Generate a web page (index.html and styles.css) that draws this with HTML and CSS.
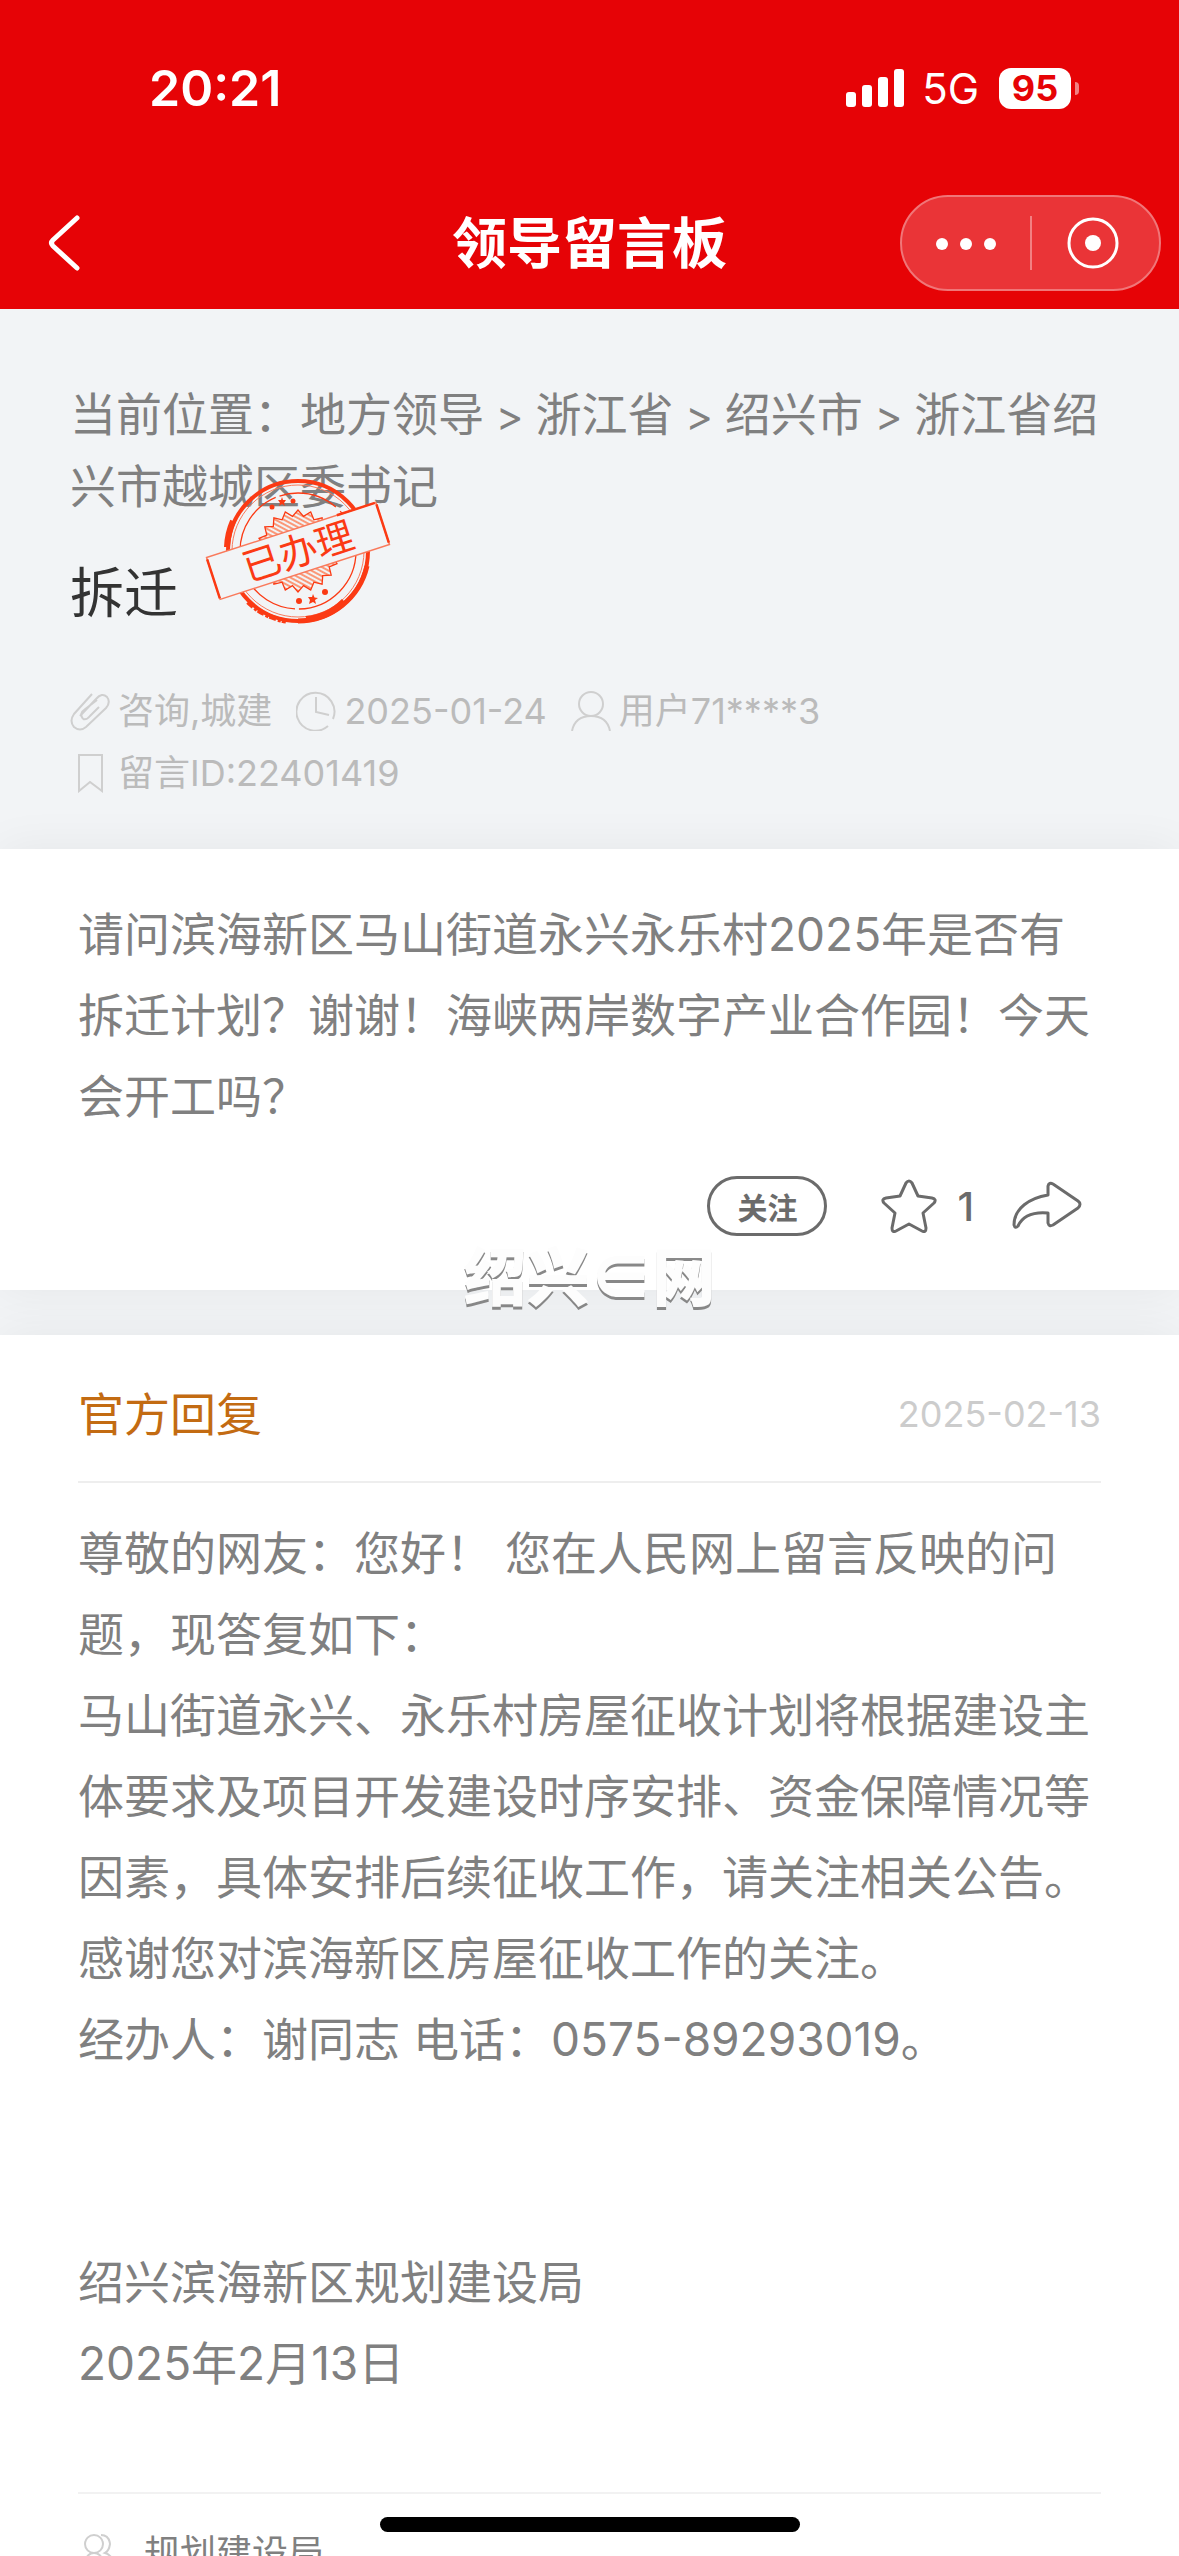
FILE: index.html
```html
<!DOCTYPE html>
<html lang="zh-CN">
<head>
    <meta charset="UTF-8">
    <title>领导留言板</title>
    <meta name="viewport" content="width=device-width, initial-scale=1.0">
    <link rel="stylesheet" href="styles.css">
</head>
<body>
    <div class="app">
        <header class="top">
            <div class="status-bar">
                <span class="time">20:21</span>
                <div class="status-right">
                    <svg class="signal" viewBox="0 0 58 38" fill="#fff">
                        <rect x="0" y="23" width="10" height="15" rx="3"/>
                        <rect x="16" y="16" width="10" height="22" rx="3"/>
                        <rect x="32" y="8" width="10" height="30" rx="3"/>
                        <rect x="48" y="0" width="10" height="38" rx="3"/>
                    </svg>
                    <span class="network">5G</span>
                    <div class="battery"><span class="battery-level">95</span></div>
                </div>
            </div>
            <div class="nav-bar">
                <button class="back" aria-label="返回">
                    <svg viewBox="0 0 32 56" fill="none" stroke="#fff" stroke-width="5" stroke-linecap="round" stroke-linejoin="round">
                        <path d="M29 3L5 25Q2 28 5 31L29 53"/>
                    </svg>
                </button>
                <h1>领导留言板</h1>
                <div class="capsule">
                    <button aria-label="更多">
                        <svg viewBox="0 0 60 54" fill="#fff">
                            <circle cx="6" cy="28" r="6"/>
                            <circle cx="30" cy="28" r="6"/>
                            <circle cx="54" cy="28" r="6"/>
                        </svg>
                    </button>
                    <button aria-label="关闭">
                        <svg viewBox="0 0 60 54">
                            <circle cx="28" cy="27" r="24" fill="none" stroke="#fff" stroke-width="3"/>
                            <circle cx="28" cy="27" r="8" fill="#fff"/>
                        </svg>
                    </button>
                </div>
            </div>
        </header>

        <section class="summary">
            <nav class="crumbs">当前位置：<a href="#">地方领导</a><span class="sep"> &gt; </span><a href="#">浙江省</a><span class="sep"> &gt; </span><a href="#">绍兴市</a><span class="sep"> &gt; </span><a href="#">浙江省绍兴市越城区委书记</a></nav>
            <div class="title-row">
                <h2>拆迁</h2>
                <svg class="stamp" viewBox="-95 -75 190 150">
                    <defs>
                        <pattern id="hatch" width="4" height="4" patternUnits="userSpaceOnUse" patternTransform="rotate(-62)">
                            <path d="M1 0V4" stroke="#f63" stroke-width="1.3"/>
                        </pattern>
                    </defs>
                    <g fill="none" stroke="#fb3a14">
                        <circle r="70" stroke-width="4"/>
                        <circle r="66" stroke-width="1" stroke="#f97a5c"/>
                        <circle r="58" stroke-width="1.3" stroke-dasharray="90 4 60 6"/>
                        <path d="M-65 -30A72 72 0 0 0 -71 -4" stroke-width="6"/>
                        <path d="M-50 51A72 72 0 0 0 -12 70" stroke-width="5" stroke-dasharray="7 2 3 1"/>
                        <path d="M0 70A71 71 0 0 0 69 15" stroke-width="5"/>
                        <path d="M8 68Q30 66 46 50" stroke-width="6"/>
                        <path fill="url(#hatch)" stroke-width="1.3" d="M41 0L34.6 5.5L39 12.7L31.2 15.9L33.2 24.1L24.7 24.7L24.1 33.2L15.9 31.2L12.7 39L5.5 34.6L0 41L-5.5 34.6L-12.7 39L-15.9 31.2L-24.1 33.2L-24.7 24.7L-33.2 24.1L-31.2 15.9L-39 12.7L-34.6 5.5L-41 0L-34.6 -5.5L-39 -12.7L-31.2 -15.9L-33.2 -24.1L-24.7 -24.7L-24.1 -33.2L-15.9 -31.2L-12.7 -39L-5.5 -34.6L0 -41L5.5 -34.6L12.7 -39L15.9 -31.2L24.1 -33.2L24.7 -24.7L33.2 -24.1L31.2 -15.9L39 -12.7L34.6 -5.5Z"/>
                    </g>
                    <g fill="#fb3a14">
                        <path d="M-16 -54L-15 -51L-12 -51L-14 -48L-13 -45L-16 -47L-19 -45L-18 -48L-20 -51L-17 -51Z"/>
                        <circle cx="-26" cy="-44" r="2.5"/>
                        <circle cx="-5" cy="-50" r="2.5"/>
                        <path d="M15 43L16.5 46.5L20 47L17 49L18 53L15 51L11 53L12 49L10 46L14 46Z"/>
                        <circle cx="1" cy="50" r="3"/>
                        <circle cx="27" cy="41" r="3"/>
                    </g>
                    <g transform="rotate(-18)">
                        <rect x="-89" y="-22" width="178" height="44" fill="#f2f4f6" stroke="#f97a5c" stroke-width="1.5"/>
                        <path d="M-89 -20V21M89 -20V20M48 -22H88" fill="none" stroke="#fb3a14" stroke-width="2.5"/>
                        <text class="stamp-text" x="0" y="14" text-anchor="middle">已办理</text>
                    </g>
                </svg>
            </div>
            <div class="meta">
                <span class="meta-item">
                    <svg viewBox="0 0 40 40">
                        <path d="M10 25L26 8Q32 1 37 6Q41 11 36 17L16 36Q10 41 4 36Q-1 30 4 23L22 3M13 28Q9 22 14 19L27 9M13 28Q17 29 20 25L29 16"/>
                    </svg>
                    咨询,城建
                </span>
                <span class="meta-item">
                    <svg viewBox="0 0 40 40">
                        <path d="M32 35A19 19 0 1 1 37 28M20 6V21L33 24"/>
                    </svg>
                    <time>2025-01-24</time>
                </span>
                <span class="meta-item">
                    <svg viewBox="0 0 40 40">
                        <circle cx="20" cy="13" r="12"/>
                        <path d="M1 40Q4 25 20 25T39 40"/>
                    </svg>
                    用户71****3
                </span>
                <span class="meta-item">
                    <svg viewBox="0 0 40 40">
                        <path d="M9 2H32V38L20 29L9 38Z"/>
                    </svg>
                    留言ID:22401419
                </span>
            </div>
        </section>

        <section class="card question">
            <p>请问滨海新区马山街道永兴永乐村2025年是否有拆迁计划？谢谢！海峡两岸数字产业合作园！今天会开工吗？</p>
            <div class="actions">
                <button class="follow">关注</button>
                <button class="like">
                    <svg viewBox="0 0 56 54">
                        <path d="M25 4Q28 0 31 4L37 17L51 19Q56 20 53 24L42 34L45 49Q45 54 41 52L28 45L15 52Q11 54 11 49L14 34L3 24Q0 20 5 19L19 17Z"/>
                    </svg>
                    1
                </button>
                <button class="share" aria-label="分享">
                    <svg viewBox="0 0 70 50">
                        <path d="M36 14V5Q37 1 41 3L66 20Q70 23 66 27L41 44Q37 46 36 42V32Q13 30 6 45Q3 48 2 44C2 27 18 17 36 14Z"/>
                    </svg>
                </button>
            </div>
            <div class="watermark">绍兴∈网</div>
        </section>

        <section class="card reply">
            <div class="reply-head">
                <h3>官方回复</h3>
                <time>2025-02-13</time>
            </div>
            <div class="reply-body">
                <p>尊敬的网友：您好！ 您在人民网上留言反映的问题，现答复如下：</p>
                <p>马山街道永兴、永乐村房屋征收计划将根据建设主体要求及项目开发建设时序安排、资金保障情况等因素，具体安排后续征收工作，请关注相关公告。</p>
                <p>感谢您对滨海新区房屋征收工作的关注。</p>
                <p>经办人：谢同志 电话：0575-89293019。</p>
                <p class="sign">绍兴滨海新区规划建设局</p>
                <p>2025年2月13日</p>
            </div>
            <div class="reply-foot">
                <svg viewBox="0 0 36 40">
                    <circle cx="12" cy="11" r="9"/>
                    <path d="M1 40Q2 20 12 20T24 40M19 2Q27 2 28 11Q27 18 23 20Q33 23 34 40"/>
                </svg>
                规划建设局
            </div>
        </section>
        <div class="home-indicator"></div>
    </div>
</body>
</html>
```
FILE: styles.css
```css
:root {
    --red: #e60306;
    --bg: #f2f4f6;
    --text: #808080;
    --muted: #bbbbbb;
    --icon: #cfcfcf;
    --dark: #6b6b6b;
}
* {
    box-sizing: border-box;
}
body {
    margin: 0;
    font-family: Inter, "Noto Sans CJK SC", sans-serif;
    font-size: 46px;
    line-height: 81px;
    color: var(--text);
    background-color: var(--bg);
}
h1, h2, h3, p {
    margin: 0;
    font-weight: 400;
}
button {
    padding: 0;
    border: none;
    background: none;
    color: inherit;
    font-family: inherit;
    cursor: pointer;
}
svg {
    display: block;
    flex: none;
}
.app {
    position: relative;
    height: 100vh;
    overflow: hidden;
    display: flex;
    flex-direction: column;
}

/* header */
.top {
    background-color: var(--red);
    color: #fff;
    padding-bottom: 18px;
}
.status-bar {
    display: flex;
    justify-content: space-between;
    align-items: center;
    height: 176px;
    padding: 0 98px 0 149px;
}
.time {
    font-size: 50px;
    font-weight: 600;
}
.status-right {
    display: flex;
    align-items: center;
}
.signal {
    width: 58px;
    height: 38px;
}
.network {
    font-size: 42px;
    margin: 0 20px 0 18px;
}
.battery {
    position: relative;
    width: 72px;
    height: 41px;
    margin-right: 10px;
    border-radius: 12px;
    background-color: #fff;
    color: var(--red);
    font-size: 36px;
    font-weight: 700;
    line-height: 41px;
    text-align: center;
}
.battery::after {
    content: "";
    position: absolute;
    right: -8px;
    top: 14px;
    width: 4px;
    height: 13px;
    border-radius: 0 4px 4px 0;
    background-color: #f28082;
}
.nav-bar {
    display: grid;
    grid-template-columns: 1fr auto 1fr;
    align-items: center;
    height: 115px;
    padding: 19px 18px 0;
}
.nav-bar h1 {
    font-size: 55px;
    font-weight: 700;
}
.back {
    justify-self: start;
    padding-left: 30px;
}
.back svg {
    width: 32px;
    height: 56px;
}
.capsule {
    justify-self: end;
    display: flex;
    align-items: center;
    width: 261px;
    height: 96px;
    border: 2px solid #f07678;
    border-radius: 48px;
    background-color: #ea3437;
}
.capsule button {
    flex: 1;
    display: flex;
    justify-content: center;
}
.capsule button + button {
    border-left: 2px solid #f28082;
}
.capsule svg {
    width: 60px;
    height: 54px;
}

/* message summary */
.summary {
    padding: 69px 70px 45px;
}
.crumbs {
    line-height: 72px;
}
.crumbs a {
    color: inherit;
    text-decoration: none;
}
.sep {
    font-size: 42px;
    line-height: 42px;
}
.title-row {
    position: relative;
    margin-top: 36px;
}
.title-row h2 {
    font-size: 54px;
    line-height: 72px;
    color: #333;
}
.stamp {
    position: absolute;
    left: 133px;
    top: -82px;
    width: 190px;
    height: 150px;
}
.stamp-text {
    font-size: 38px;
    fill: #fb3a14;
}
.meta {
    display: flex;
    flex-wrap: wrap;
    column-gap: 24px;
    margin-top: 50px;
    font-size: 36px;
    line-height: 62px;
    color: var(--muted);
}
.meta-item {
    display: flex;
    align-items: center;
    gap: 8px;
}
.meta svg, .reply-foot svg {
    width: 40px;
    height: 40px;
    fill: none;
    stroke: var(--icon);
    stroke-width: 2;
}

/* cards */
.card {
    position: relative;
    background-color: #fff;
    box-shadow: 0 0 45px rgba(0, 0, 0, 0.06);
    padding: 45px 78px 0;
}
.question {
    margin-bottom: 45px;
    padding-bottom: 54px;
}
.actions {
    display: flex;
    justify-content: flex-end;
    align-items: center;
    margin-top: 39px;
    padding-right: 19px;
    color: var(--dark);
}
.actions svg {
    fill: none;
    stroke: var(--dark);
    stroke-width: 3;
    stroke-linejoin: round;
}
.follow {
    width: 120px;
    height: 60px;
    border: 3px solid var(--dark);
    border-radius: 30px;
    font-size: 30px;
    font-weight: 700;
}
.like {
    display: flex;
    align-items: center;
    gap: 20px;
    margin: 0 38px 0 54px;
    font-size: 40px;
    font-weight: 500;
}
.like svg {
    width: 56px;
    height: 54px;
}
.share svg {
    width: 70px;
    height: 50px;
}
.watermark {
    position: absolute;
    left: 0;
    right: 0;
    bottom: -27px;
    font-size: 63px;
    font-weight: 900;
    line-height: 80px;
    text-align: center;
    color: #fdfdfd;
    text-shadow: 0 3px 0 #888;
}
.reply {
    flex: 1;
    padding-top: 39px;
}
.reply-head {
    display: flex;
    justify-content: space-between;
    align-items: center;
    padding-bottom: 26px;
    border-bottom: 2px solid #eee;
}
.reply-head h3 {
    font-size: 46px;
    color: #c36b12;
}
.reply-head time {
    font-size: 36px;
    color: #ccc;
}
.reply-body {
    padding: 30px 0 88px;
    border-bottom: 2px solid #f2f2f2;
}
.sign {
    margin-top: 162px;
}
.reply-foot {
    display: flex;
    align-items: center;
    gap: 26px;
    padding: 28px 4px 0;
    font-size: 36px;
    line-height: 62px;
}
.reply-foot svg {
    width: 36px;
}
.home-indicator {
    position: absolute;
    left: 50%;
    bottom: 24px;
    width: 420px;
    height: 15px;
    margin-left: -210px;
    border-radius: 8px;
    background-color: #000;
}
```
